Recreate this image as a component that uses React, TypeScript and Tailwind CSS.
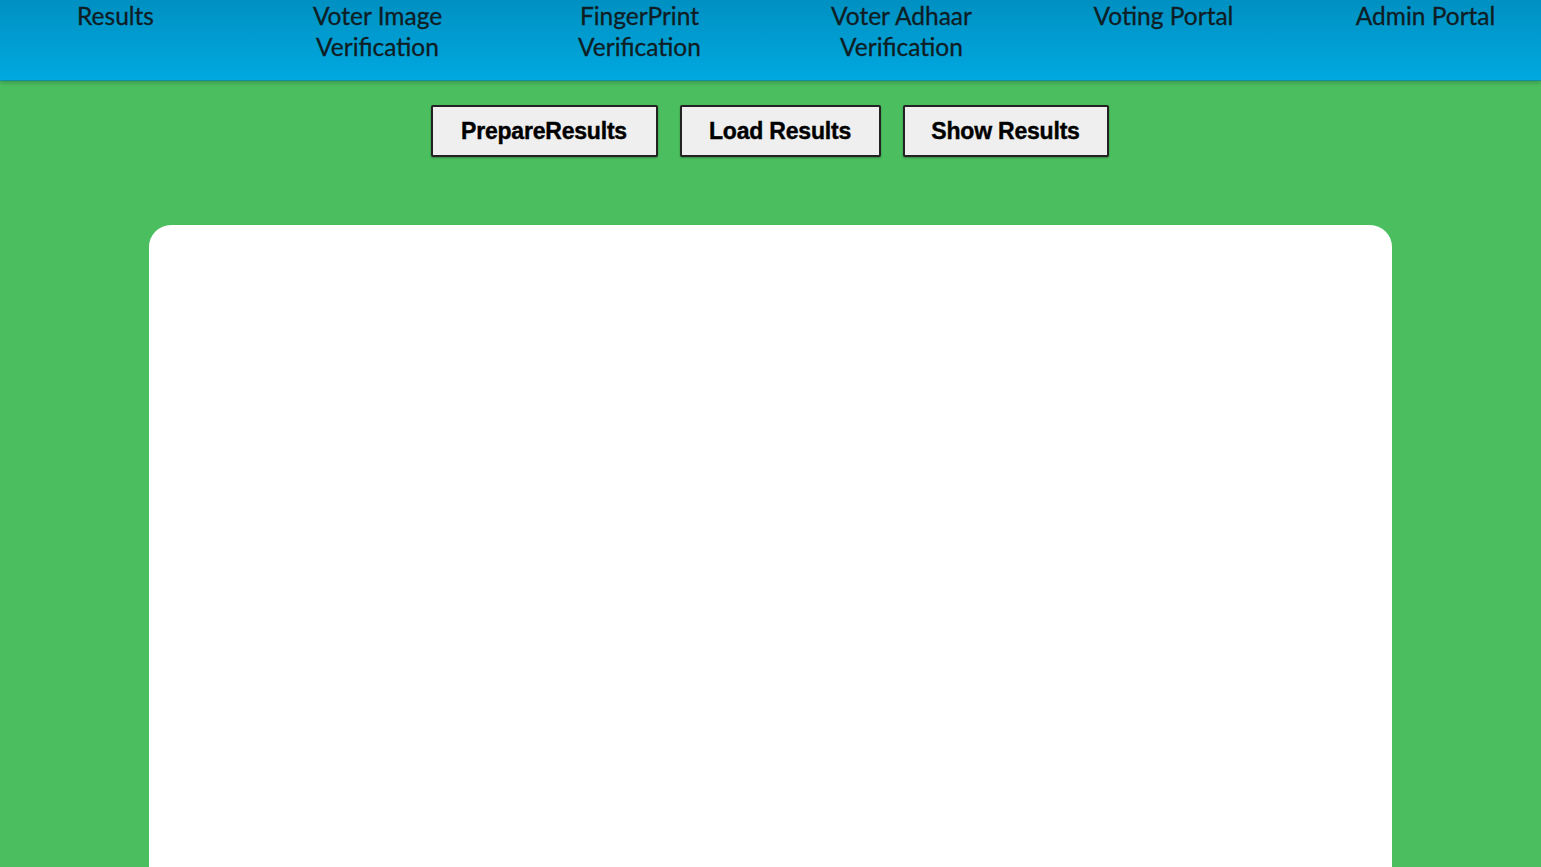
import React from "react";

const navItems = [
  ["Results"],
  ["Voter Image", "Verification"],
  ["FingerPrint", "Verification"],
  ["Voter Adhaar", "Verification"],
  ["Voting Portal"],
  ["Admin Portal"],
];

const buttons = [
  { label: "PrepareResults", w: "w-[227px]" },
  { label: "Load Results", w: "w-[201px]" },
  { label: "Show Results", w: "w-[206px]" },
];

export default function App() {
  return (
    <div className="min-h-screen h-[867px] overflow-hidden bg-[#4bbf5f] flex flex-col">
      <header className="h-[81px] shrink-0 bg-gradient-to-b from-[#0090c2] to-[#00a9e0] border-b border-[#0f8fa0] shadow-[0_2px_4px_rgba(0,0,0,0.2)] overflow-hidden">
        <nav className="flex justify-center">
          {navItems.map((lines) => (
            <a
              key={lines.join(" ")}
              className="w-[262px] shrink-0 text-center text-[24.5px] leading-[31px] text-[#0f1d24] font-['Lato',sans-serif] [-webkit-text-stroke:0.3px_#0f1d24]"
            >
              {lines.map((l) => (
                <div key={l}>{l}</div>
              ))}
            </a>
          ))}
        </nav>
      </header>

      <div className="flex justify-center gap-[22px] pt-[24px] pr-[2px]">
        {buttons.map((b) => (
          <button
            key={b.label}
            className={`${b.w} h-[52px] bg-[#efefef] border-2 border-[#222] rounded-[2px] text-[23px] tracking-[-0.2px] font-bold text-black font-['Liberation_Sans',Arial,sans-serif] [-webkit-text-stroke:0.4px_#000] shadow-[0_1px_2px_rgba(0,0,0,0.3)]`}
          >
            {b.label}
          </button>
        ))}
      </div>

      <div className="flex justify-center pt-[68px] flex-1">
        <div className="w-[1243px] h-[700px] bg-white rounded-[22px]" />
      </div>
    </div>
  );
}
